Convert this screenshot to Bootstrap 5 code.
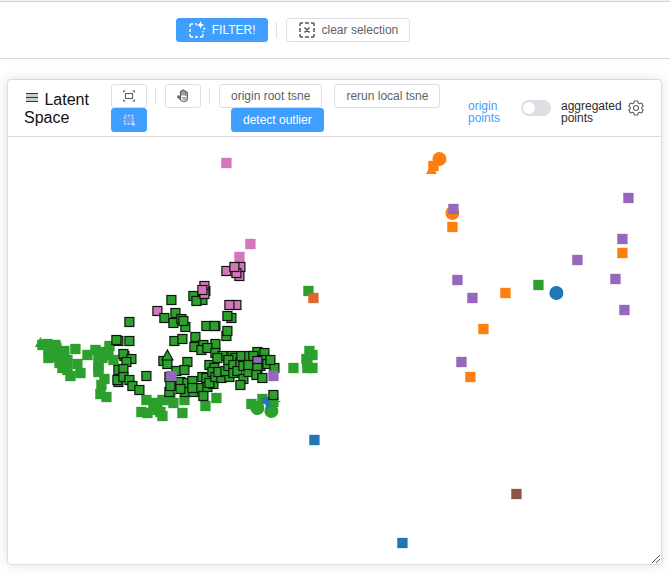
<!DOCTYPE html>
<html lang="en">
<head>
<meta charset="utf-8">
<meta name="viewport" content="width=device-width, initial-scale=1">
<title>Latent Space</title>
<link href="https://cdn.jsdelivr.net/npm/bootstrap@5.3.0/dist/css/bootstrap.min.css" rel="stylesheet">
<style>
body{font-family:"Liberation Sans",Arial,sans-serif;font-size:12px;line-height:12px;color:#2c2c2c;background:#fff}
.topbar{border-top:1px solid #f2f2f2;border-bottom:1px solid #d8d8d8}
.topbar-inner{border-top:1px solid #d4d4d4;padding:16px 0;padding-right:84px}
.btn-el{--bs-btn-font-size:12px;--bs-btn-line-height:12px;--bs-btn-padding-x:11px;--bs-btn-padding-y:0px;--bs-btn-border-radius:3px;--bs-btn-color:#606266;--bs-btn-bg:#fff;--bs-btn-border-color:#dcdfe6;--bs-btn-hover-color:#409eff;--bs-btn-hover-border-color:#c6e2ff;height:24px;display:inline-flex;align-items:center;justify-content:center;gap:6px;white-space:nowrap}
.btn-el.on{--bs-btn-color:#fff;--bs-btn-bg:#409eff;--bs-btn-border-color:#409eff;--bs-btn-hover-color:#fff;--bs-btn-hover-bg:#66b1ff}
.btn-icon{width:36px;--bs-btn-padding-x:0px}
.split{width:1px;height:16px;background:#dcdfe6;margin:4px 9px 4px 8px}
.panel{margin:20px 8px 10px 7px;border:1px solid #dcdcdc;border-radius:4px;box-shadow:0 0 12px rgba(0,0,0,.12)}
.panel-head{background:#fff;border-bottom:1px solid #dcdcdc;padding:4px 17px 4px 16px;min-height:57px}
.panel-title{font-size:16px;line-height:18px;color:#111;width:87px;margin:0;font-weight:400}
.indent{margin-left:12px}
.origin-label{width:53px;color:#409eff}
.agg-label{width:67px}
.toggle.form-check-input{width:30px;height:16px;margin:0 10px 0 0;border:0;border-radius:8px;background-color:#dcdfe6;background-size:100% 100%;background-position:0 0;background-image:radial-gradient(circle 6px at 8px 8px,#fff 94%,transparent 100%)}
.toggle.form-check-input:checked{background-color:#409eff;background-image:radial-gradient(circle 6px at 22px 8px,#fff 94%,transparent 100%)}
.plot{width:100%;height:auto}
.grip{right:0;bottom:0}
</style>
<script src="https://cdn.jsdelivr.net/npm/bootstrap@5.3.0/dist/js/bootstrap.bundle.min.js"></script>
</head>
<body>
<header class="topbar">
  <div class="topbar-inner d-flex justify-content-center align-items-center">
    <button type="button" class="btn btn-el on"><svg width="18" height="18" viewBox="0 0 18 18" fill="none" stroke="#fff" stroke-width="1.4"><path d="M2 6V4.500q0-1.500 1.500-1.500H5M7 3h2M2 8v3M2 13v1.500Q2 16 3.500 16H5M7 16h3M12 16h1.500q1.500 0 1.500-1.500V13M15 10v1.500"/><path d="M12.500 0l1.100 2.900 2.900 1.100-2.900 1.100-1.100 2.900-1.100-2.900-2.900-1.100 2.900-1.100zM16.200 6l.5 1.300 1.300.5-1.300.5-.5 1.300-.5-1.300-1.300-.5 1.300-.5z" fill="#fff" stroke="none"/></svg>FILTER!</button>
    <span class="split"></span>
    <button type="button" class="btn btn-el"><svg width="18" height="18" viewBox="0 0 18 18" fill="none" stroke="#555" stroke-width="1.5"><path d="M2 5V3q0-1 1-1h2M7 2h4M13 2h2q1 0 1 1v2M16 7v4M16 13v2q0 1-1 1h-2M11 16H7M5 16H3q-1 0-1-1v-2M2 11V7M6.500 6.500l5 5M11.500 6.500l-5 5"/></svg>clear selection</button>
  </div>
</header>
<main class="card panel">
  <div class="card-header panel-head d-flex align-items-center">
    <h1 class="panel-title flex-shrink-0"><svg width="16" height="16" viewBox="0 0 16 16" class="align-baseline"><path d="M2 4h12v8H2z" fill="#c5d2bf"/><path d="M2 4.500h12M2 8.500h12M2 12.500h12" stroke="#2e3b2e"/></svg> Latent Space</h1>
    <div class="d-flex align-items-start">
      <div class="d-flex flex-column">
        <button type="button" class="btn btn-el btn-icon" aria-label="Fit view"><svg width="14" height="14" viewBox="0 0 14 14" fill="none" stroke="#606266" stroke-width="1.100"><rect x="3.500" y="4.500" width="7" height="5"/><path d="M1.500 3.500V2H3.500M10.500 2h2v1.500M12.500 10.500V12h-2M3.500 12h-2v-1.500"/></svg></button>
        <button type="button" class="btn btn-el btn-icon on" aria-label="Area select"><svg width="14" height="14" viewBox="0 0 14 14" fill="none" stroke="#c4e2ff" stroke-width="1.400"><rect x="3" y="3" width="8" height="8" fill="#6f9cf5" stroke="none"/><rect x="2.500" y="2.500" width="8.500" height="8.500" stroke-dasharray="2 1.400"/><path d="M11.500 9.500v3M10 11.500h3"/></svg></button>
      </div>
      <span class="split"></span>
      <button type="button" class="btn btn-el btn-icon" aria-label="Pan"><svg width="14" height="14" viewBox="0 0 14 14" fill="#fff" stroke="#555" stroke-width="1.100" stroke-linejoin="round"><path d="M4.500 9V3q0-.8.8-.8T6 3v3-4q0-.9.900-.9T8 2v4-3.500q0-.8.900-.8t.9.800V6.500 4q0-.8.800-.8t.8.800v5q0 3.500-3.500 3.500-2 0-3-1.500L1.800 8q-.4-.7.300-1t1.200.5z"/><path d="M5.500 8h5l-.5 3H7z" fill="#aaa" stroke="none"/></svg></button>
      <span class="split"></span>
      <div class="flex-shrink-0"><div class="d-flex">
        <button type="button" class="btn btn-el">origin root tsne</button>
        <button type="button" class="btn btn-el indent">rerun local tsne</button></div>
        <button type="button" class="btn btn-el on indent">detect outlier</button>
      </div>
    </div>
    <div class="d-flex align-items-center ms-auto">
      <label class="origin-label mt-2" for="agg">origin points</label>
      <input class="form-check-input toggle" type="checkbox" role="switch" id="agg">
      <label class="agg-label mt-2" for="agg">aggregated points</label>
      <a href="#" aria-label="Settings"><svg class="d-block" width="16" height="16" viewBox="0 0 16 16" fill="none" stroke="#606266" stroke-width="1.100" stroke-linejoin="round"><path d="M6.300 1h3.400l.5 2.100 1.200.7 2.100-.7 1.700 2.900L13.700 7.400v1.200l1.500 1.400-1.700 2.900-2.100-.7-1.200.7-.5 2.100H6.300l-.5-2.100-1.200-.7-2.100.7L.8 10l1.500-1.400V7.400L.8 6l1.700-2.900 2.100.7 1.200-.7z"/><circle cx="8" cy="8" r="2.500"/></svg></a>
    </div>
  </div>
  <div class="position-relative">
    <svg class="plot d-block" id="plot" viewBox="7.600 137 653 427" role="img" aria-label="Scatter plot of the latent space"></svg>
    <svg class="grip position-absolute" width="10" height="10" viewBox="0 0 10 10" stroke="#555"><path d="M1 9l8-8M5 9l4-4"/></svg>
  </div>
</main>
<script>
const C={g:'#2ca02c',k:'#d475bd',p:'#9469bd',o:'#ff7f0e',b:'#1f77b4',n:'#8c564b',r:'#d9692a'};
const plot=document.getElementById('plot');
function add(tag,a){const e=document.createElementNS('http://www.w3.org/2000/svg',tag);for(const k in a)e.setAttribute(k,a[k]);plot.append(e)}
function squares(c,s){s.trim().split(/\s+/).forEach(t=>{const [x,y]=t.split(',').map(Number);add('rect',{x:x-5,y:y-5,width:10,height:10,fill:C[c],stroke:C[c],'stroke-opacity':.4,'stroke-width':.8})})}
function picked(c,s){s.trim().split(/\s+/).forEach(t=>{const [x,y]=t.split(',').map(Number);add('rect',{x:x-4.5,y:y-4.5,width:9,height:9,fill:C[c],stroke:'#0b160b','stroke-width':1.2})})}
function circle(c,x,y){add('circle',{cx:x,cy:y,r:7,fill:C[c]})}
function triangle(c,x,y,line){add('path',{d:`M${x} ${y-6}L${x+5.5} ${y+4}H${x-5.5}Z`,fill:C[c],stroke:line||'none','stroke-width':1.2})}
triangle('g',40,343);
squares('g','42,345 47,344 55,345 50,350 48,358 55,357 64,351 67,360 59,363 62,368 70,376 80,373 77,364 67,370 58,352 48,351 56,348 63,356 52,353 66,366 75,349 87,355 95,350 98,355 103,352 109,346 108,355 113,360 102,358 98,364 98,368 98,372 104,379 101,385 100,394 106,397');
squares('g','146,400 153,403 155,407 141,412 147,413 157,410 160,412 162,416 162,400 168,400 173,403 184,400 182,413 170,398 205,406 216,398 251,404 262,399 273,402 293,368 309,351 312,355 306,359 307,363 307,368 312,368 308,291 538,285');
circle('g',257,408);circle('g',271,411);
add('path',{d:'M262 397h7v4l1 4-4 5-1-6-3-2zM278 401h2v1h-2z',fill:C.b});
squares('k','226,163 250,244 239,257');
squares('r','313,298');
picked('k','157,311 240,267 239,276 226,271 236,273 234,267 236,305 229,305');
picked('g','171,300 193,296 202,300 196,301 205,291');
picked('k','204,286 204,294 202,290');
picked('g','129,322 118,341 116,340 129,341 124,356 123,354 131,359 126,362 118,370 123,369 118,382 117,380 123,377 129,380 132,386 139,390 146,376 164,318 175,313 173,323 185,327 181,319 183,321 174,341 182,339 206,326 215,326 214,326 231,318 227,316 226,336 227,331 195,337 194,347 203,345 201,350 215,344 207,348 163,361 167,364');
triangle('g',167,356,'#0b160b');
picked('g','187,362 176,371 184,370 169,377 169,392 175,385 180,382 185,392 170,386 187,383 193,392 180,389 192,381 200,388 192,388 203,396 207,387 202,377 213,384 206,378 209,383 215,353 209,365 214,368 222,356 217,358 212,372 215,377 221,378 218,372 229,377 225,371 232,356 228,366 235,358 228,360 233,365 233,373 237,371 243,379 240,385 240,362 243,366 241,356 249,356 248,372 257,352 248,365 253,356 260,366 264,353 262,360');
picked('p','257,361');
picked('g','257,368 267,364 274,368 270,360 256,375 262,378 273,395');
squares('p','171,376 273,376');
squares('b','314,440 402,543');squares('n','516,494');
triangle('o',431,170);squares('o','433,166');circle('o',439,159);circle('o',452,213);
squares('o','452,227 505,293 483,329 470,377 622,253');
squares('p','453,209 628,198 622,239 577,260 615,279 624,310 457,280 472,298 461,362');
circle('b',556,293);
</script>
</body>
</html>
